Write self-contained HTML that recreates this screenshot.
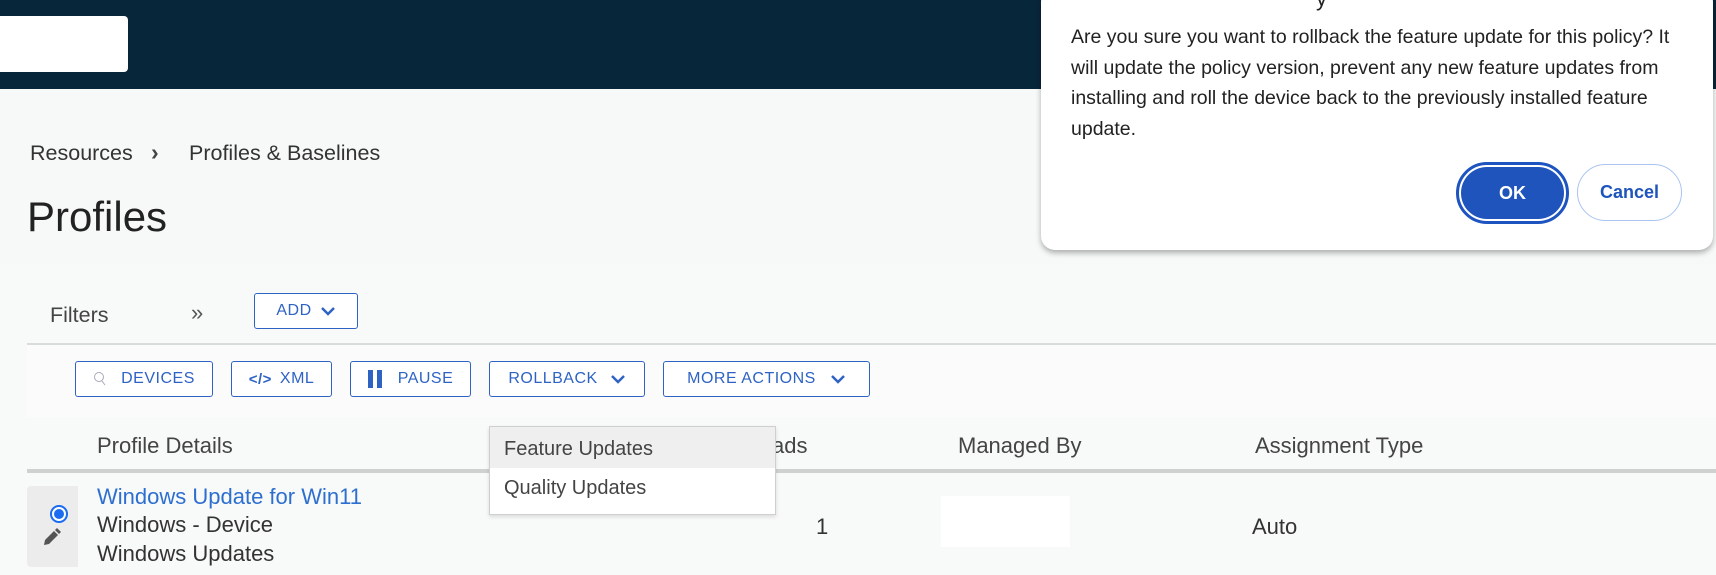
<!DOCTYPE html>
<html><head><meta charset="utf-8"><style>
*{margin:0;padding:0;box-sizing:border-box}
body{width:1716px;height:575px;overflow:hidden;background:#f8f9f9;font-family:"Liberation Sans",sans-serif;position:relative;color:#333}
.a{position:absolute;white-space:nowrap}
.btn{position:absolute;border:1px solid #2e63c4;border-radius:3px;color:#2e63c4;font-size:16px;letter-spacing:.5px;display:flex;align-items:center;justify-content:center;gap:8px;background:#fff}
</style></head><body>
<div class="a" style="left:0;top:0;width:1716px;height:89px;background:#08263a"></div>
<div class="a" style="left:0;top:16px;width:128px;height:56px;background:#fff;border-radius:0 4px 4px 0"></div>
<div class="a" style="left:0;top:89px;width:1716px;height:175px;background:#f7f9f9"></div>
<div class="a" style="left:30px;top:141px;font-size:21.5px;color:#333">Resources</div>
<div class="a" style="left:151px;top:139px;font-size:23px;font-weight:bold;color:#444">›</div>
<div class="a" style="left:189px;top:141px;font-size:21.5px;color:#333">Profiles &amp; Baselines</div>
<div class="a" style="left:27px;top:193px;font-size:42px;color:#222;font-weight:300">Profiles</div>
<div class="a" style="left:50px;top:303px;font-size:21.5px;color:#444">Filters</div>
<div class="a" style="left:191px;top:300px;font-size:22px;color:#555">»</div>
<div class="btn" style="left:254px;top:293px;width:104px;height:36px">ADD <svg width="16" height="10" viewBox="0 0 16 10"><path d="M2 2l6 6 6-6" stroke="#2e63c4" stroke-width="2.5" fill="none"/></svg></div>
<div class="a" style="left:27px;top:343px;width:1689px;height:2px;background:#d9dcdc"></div>
<div class="a" style="left:27px;top:345px;width:1689px;height:72px;background:#fbfbfb"></div>
<div class="btn" style="left:75px;top:361px;width:138px;height:36px;gap:14px"><svg width="14" height="16" viewBox="0 0 14 16"><circle cx="6" cy="6" r="4.5" stroke="#aab" fill="none"/><path d="M9 10l3 4" stroke="#aab"/></svg>DEVICES</div>
<div class="btn" style="left:231px;top:361px;width:101px;height:36px"><b style="font-size:15px">&lt;/&gt;</b>XML</div>
<div class="btn" style="left:350px;top:361px;width:121px;height:36px;gap:16px"><svg width="14" height="18"><rect x="0" y="0" width="5" height="18" fill="#2e63c4"/><rect x="9" y="0" width="5" height="18" fill="#2e63c4"/></svg>PAUSE</div>
<div class="btn" style="left:489px;top:361px;width:156px;height:36px;gap:12px">ROLLBACK <svg width="16" height="10" viewBox="0 0 16 10"><path d="M2 2l6 6 6-6" stroke="#2e63c4" stroke-width="2.5" fill="none"/></svg></div>
<div class="btn" style="left:663px;top:361px;width:207px;height:36px;gap:14px">MORE ACTIONS <svg width="16" height="10" viewBox="0 0 16 10"><path d="M2 2l6 6 6-6" stroke="#2e63c4" stroke-width="2.5" fill="none"/></svg></div>
<div class="a" style="left:97px;top:433px;font-size:22px;color:#444">Profile Details</div>
<div class="a" style="left:772px;top:433px;font-size:22px;color:#444">ads</div>
<div class="a" style="left:958px;top:433px;font-size:22px;color:#444">Managed By</div>
<div class="a" style="left:1255px;top:433px;font-size:22px;color:#444">Assignment Type</div>
<div class="a" style="left:27px;top:469px;width:1689px;height:4px;background:#cfd1d1"></div>
<div class="a" style="left:27px;top:486px;width:51px;height:81px;background:#ececec;border-radius:4px 0 0 4px"></div>
<div class="a" style="left:50px;top:505px;width:18px;height:18px;border-radius:50%;border:2px solid #1a6cf0;background:#fff"><div style="margin:2px;width:10px;height:10px;border-radius:50%;background:#1a6cf0"></div></div>
<svg class="a" style="left:42px;top:527px" width="20" height="20" viewBox="0 0 20 20"><path d="M2 18l1-5 9-9 4 4-9 9z M13 3l2-2 4 4-2 2z" fill="#555"/></svg>
<div class="a" style="left:97px;top:484px;font-size:22px;color:#2d6fd0">Windows Update for Win11</div>
<div class="a" style="left:97px;top:512px;font-size:22px;color:#333">Windows - Device</div>
<div class="a" style="left:97px;top:541px;font-size:22px;color:#333">Windows Updates</div>
<div class="a" style="left:816px;top:514px;font-size:22px;color:#333">1</div>
<div class="a" style="left:941px;top:496px;width:129px;height:51px;background:#fff"></div>
<div class="a" style="left:1252px;top:514px;font-size:22px;color:#333">Auto</div>
<div class="a" style="left:489px;top:426px;width:287px;height:89px;background:#fff;border:1px solid #cfcfcf;box-shadow:0 2px 4px rgba(0,0,0,.12)">
<div style="height:41px;background:#efefef;font-size:20px;color:#444;padding:11px 0 0 14px">Feature Updates</div>
<div style="font-size:20px;color:#444;padding:9px 0 0 14px">Quality Updates</div></div>
<div class="a" style="left:1041px;top:-12px;width:672px;height:262px;background:#fff;border-radius:14px;box-shadow:0 3px 6px rgba(0,0,0,.3)"></div>
<div class="a" style="left:1316px;top:-14px;font-size:22px;color:#222">y</div>
<div class="a" style="left:1071px;top:22px;font-size:19.5px;line-height:30.5px;color:#222">Are you sure you want to rollback the feature update for this policy? It<br>will update the policy version, prevent any new feature updates from<br>installing and roll the device back to the previously installed feature<br>update.</div>
<div class="a" style="left:1456px;top:162px;width:113px;height:62px;border-radius:31px;border:3px solid #1e54c0;padding:2px"><div style="width:100%;height:100%;border-radius:28px;background:#1e54bb;color:#fff;font-size:18px;font-weight:bold;display:flex;align-items:center;justify-content:center">OK</div></div>
<div class="a" style="left:1577px;top:164px;width:105px;height:57px;border-radius:29px;border:1px solid #a9c4f2;color:#1e54bb;font-size:18px;font-weight:bold;display:flex;align-items:center;justify-content:center;background:#fff">Cancel</div>
</body></html>
